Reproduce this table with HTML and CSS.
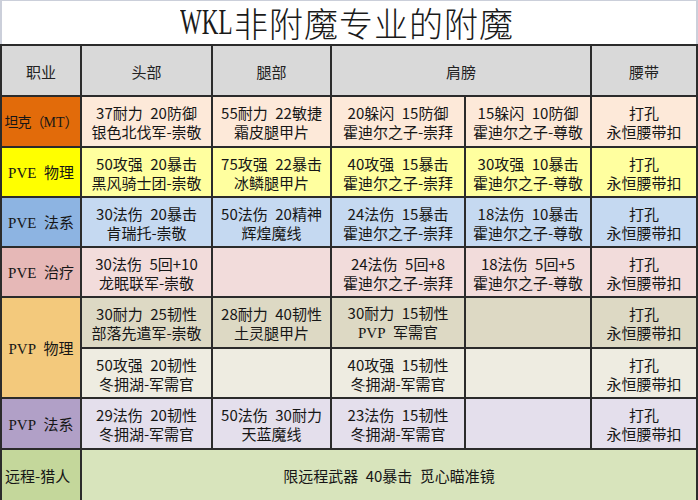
FILE: index.html
```html
<!DOCTYPE html>
<html lang="zh-CN">
<head>
<meta charset="utf-8">
<title>WKL非附魔专业的附魔</title>
<link rel="stylesheet" href="styles.css">
</head>
<body>
<div class="page">
  <div class="title"><span class="t-lat">WKL</span><span class="t-cjk">非附魔专业的附魔</span></div>
  <div class="grid">
    <div class="c hd"><span>职业</span></div>
    <div class="c hd"><span>头部</span></div>
    <div class="c hd"><span>腿部</span></div>
    <div class="c hd span2"><span>肩膀</span></div>
    <div class="c hd"><span>腰带</span></div>

    <div class="c lab tank-l"><span class="mt">坦克（<span class="lat">MT</span>）</span></div>
    <div class="c tank"><span>37耐力&ensp;20防御<br>银色北伐军-崇敬</span></div>
    <div class="c tank"><span>55耐力&ensp;22敏捷<br>霜皮腿甲片</span></div>
    <div class="c tank"><span>20躲闪&ensp;15防御<br>霍迪尔之子-崇拜</span></div>
    <div class="c tank"><span>15躲闪&ensp;10防御<br>霍迪尔之子-尊敬</span></div>
    <div class="c tank"><span>打孔<br>永恒腰带扣</span></div>

    <div class="c lab phys-l"><span><span class="lat">PVE</span>&ensp;物理</span></div>
    <div class="c phys"><span>50攻强&ensp;20暴击<br>黑风骑士团-崇敬</span></div>
    <div class="c phys"><span>75攻强&ensp;22暴击<br>冰鳞腿甲片</span></div>
    <div class="c phys"><span>40攻强&ensp;15暴击<br>霍迪尔之子-崇拜</span></div>
    <div class="c phys"><span>30攻强&ensp;10暴击<br>霍迪尔之子-尊敬</span></div>
    <div class="c phys"><span>打孔<br>永恒腰带扣</span></div>

    <div class="c lab mag-l"><span><span class="lat">PVE</span>&ensp;法系</span></div>
    <div class="c mag"><span>30法伤&ensp;20暴击<br>肯瑞托-崇敬</span></div>
    <div class="c mag"><span>50法伤&ensp;20精神<br>辉煌魔线</span></div>
    <div class="c mag"><span>24法伤&ensp;15暴击<br>霍迪尔之子-崇拜</span></div>
    <div class="c mag"><span>18法伤&ensp;10暴击<br>霍迪尔之子-尊敬</span></div>
    <div class="c mag"><span>打孔<br>永恒腰带扣</span></div>

    <div class="c lab heal-l"><span><span class="lat">PVE</span>&ensp;治疗</span></div>
    <div class="c heal"><span>30法伤&ensp;5回+10<br>龙眠联军-崇敬</span></div>
    <div class="c heal"></div>
    <div class="c heal"><span>24法伤&ensp;5回+8<br>霍迪尔之子-崇拜</span></div>
    <div class="c heal"><span>18法伤&ensp;5回+5<br>霍迪尔之子-尊敬</span></div>
    <div class="c heal"><span>打孔<br>永恒腰带扣</span></div>

    <div class="c lab pvp-l rspan2"><span><span class="lat">PVP</span>&ensp;物理</span></div>
    <div class="c pvp1"><span>30耐力&ensp;25韧性<br>部落先遣军-崇敬</span></div>
    <div class="c pvp1"><span>28耐力&ensp;40韧性<br>土灵腿甲片</span></div>
    <div class="c pvp1"><span>30耐力&ensp;15韧性<br><span class="lat">PVP</span>&ensp;军需官</span></div>
    <div class="c pvp1"></div>
    <div class="c pvp1"><span>打孔<br>永恒腰带扣</span></div>

    <div class="c pvp2"><span>50攻强&ensp;20韧性<br>冬拥湖-军需官</span></div>
    <div class="c pvp2"></div>
    <div class="c pvp2"><span>40攻强&ensp;15韧性<br>冬拥湖-军需官</span></div>
    <div class="c pvp2"></div>
    <div class="c pvp2"><span>打孔<br>永恒腰带扣</span></div>

    <div class="c lab pvpm-l"><span><span class="lat">PVP</span>&ensp;法系</span></div>
    <div class="c pvpm"><span>29法伤&ensp;20韧性<br>冬拥湖-军需官</span></div>
    <div class="c pvpm"><span>50法伤&ensp;30耐力<br>天蓝魔线</span></div>
    <div class="c pvpm"><span>23法伤&ensp;15韧性<br>冬拥湖-军需官</span></div>
    <div class="c pvpm"></div>
    <div class="c pvpm"><span>打孔<br>永恒腰带扣</span></div>

    <div class="c lab hunt-l"><span>远程-猎人</span></div>
    <div class="c hunt span5"><span>限远程武器&ensp;40暴击&ensp;觅心瞄准镜</span></div>
  </div>
</div>
</body>
</html>
```

FILE: styles.css
```css
html, body {
  margin: 0;
  padding: 0;
  background: #ffffff;
}

.page {
  width: 698px;
  height: 500px;
  overflow: hidden;
  font-family: "Noto Sans CJK SC", "Noto Sans", sans-serif;
  color: #161616;
}

.title {
  height: 44px;
  box-sizing: border-box;
  border-top: 1px solid #cbcfda;
  border-left: 2px solid #cbcfda;
  border-right: 2px solid #cbcfda;
  background: #ffffff;
  display: flex;
  align-items: center;
  justify-content: center;
  color: #1a1a1a;
  padding-right: 4px;
}

.t-lat {
  display: inline-block;
  width: 54px;
  font-family: "Liberation Serif", serif;
  font-size: 36px;
  line-height: 43px;
  white-space: nowrap;
  transform: scaleX(0.64);
  transform-origin: left center;
}

.t-cjk {
  font-size: 34px;
  line-height: 43px;
  font-weight: 300;
  letter-spacing: 1px;
}

.grid {
  display: grid;
  grid-template-columns: 78px 129px 117px 132px 124px 104px;
  grid-template-rows: 49px 49px 48px 48px 48px 49px 48px 49px 50px;
  gap: 2px;
  padding: 2px 2px 0 2px;
  background: #2b2b2b;
  height: 456px;
  box-sizing: border-box;
}

.c {
  display: flex;
  align-items: center;
  justify-content: center;
  text-align: center;
  font-size: 15px;
  line-height: 19px;
  white-space: nowrap;
  padding-top: 1px;
  box-sizing: border-box;
  min-width: 0;
}

.lat {
  font-family: "Liberation Serif", serif;
  font-size: 15px;
}

.mt {
  font-size: 14px;
  letter-spacing: -1px;
}

.mt .lat {
  font-size: 14px;
  letter-spacing: 0;
}

.span2 { grid-column: span 2; }
.span5 { grid-column: span 5; }
.rspan2 { grid-row: span 2; }

.hd { background: #d9d9d9; color: #222; }

.tank-l { background: #e26b0a; }
.tank { background: #fde9d9; }

.phys-l { background: #ffff00; }
.phys { background: #ffff9f; }

.mag-l { background: #8db4e2; }
.mag { background: #c5d9f1; }

.heal-l { background: #e6b8b7; }
.heal { background: #f2dcdb; }

.pvp-l { background: #f3c97c; }
.pvp1 { background: #ddd9c4; }
.pvp2 { background: #eeece1; }

.pvpm-l { background: #b1a0c7; }
.pvpm { background: #e4dfec; }

.hunt-l {
  background: #c4d79b;
  justify-content: flex-start;
  padding-left: 3px;
}
.hunt { background: #d8e4bc; }
```
